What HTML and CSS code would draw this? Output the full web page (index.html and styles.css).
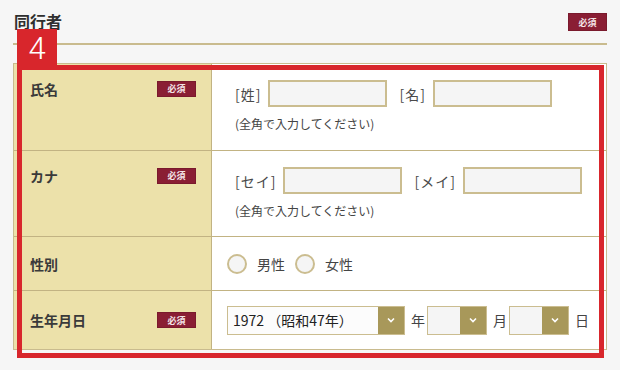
FILE: index.html
```html
<!DOCTYPE html>
<html lang="ja">
<head>
  <meta charset="UTF-8">
  <meta name="viewport" content="width=device-width, initial-scale=1.0">
  <title>同行者</title>
  <link rel="stylesheet" href="styles.css">
</head>
<body>

  <div class="wrap">
    <div class="head">
      <h2>同行者</h2>
      <span class="req req-lg">必須</span>
    </div>

    <div class="form">
      <div class="label top">
        <span>氏名</span>
        <span class="req">必須</span>
      </div>
      <div class="field">
        <div class="name">
          <span class="br">[姓]</span>
          <input type="text" class="txt">
          <span class="br br2">[名]</span>
          <input type="text" class="txt">
        </div>
        <p class="note">(全角で入力してください)</p>
      </div>

      <div class="label top">
        <span>カナ</span>
        <span class="req">必須</span>
      </div>
      <div class="field">
        <div class="name">
          <span class="br">[セイ]</span>
          <input type="text" class="txt">
          <span class="br br2">[メイ]</span>
          <input type="text" class="txt">
        </div>
        <p class="note">(全角で入力してください)</p>
      </div>

      <div class="label">
        <span>性別</span>
      </div>
      <div class="field middle">
        <label class="radio"><input type="radio" name="sex"> 男性</label>
        <label class="radio"><input type="radio" name="sex"> 女性</label>
      </div>

      <div class="label last">
        <span>生年月日</span>
        <span class="req">必須</span>
      </div>
      <div class="field middle last">
        <div class="sel sel-year">
          <select><option>1972 （昭和47年）</option></select>
          <span class="arrow"><svg width="8" height="6" viewBox="0 0 8 6"><path d="M1 1.5 L4 4.5 L7 1.5" fill="none" stroke="#fff" stroke-width="1.6"/></svg></span>
        </div>
        <span class="unit">年</span>
        <div class="sel sel-sm">
          <select><option></option></select>
          <span class="arrow"><svg width="8" height="6" viewBox="0 0 8 6"><path d="M1 1.5 L4 4.5 L7 1.5" fill="none" stroke="#fff" stroke-width="1.6"/></svg></span>
        </div>
        <span class="unit">月</span>
        <div class="sel sel-sm">
          <select><option></option></select>
          <span class="arrow"><svg width="8" height="6" viewBox="0 0 8 6"><path d="M1 1.5 L4 4.5 L7 1.5" fill="none" stroke="#fff" stroke-width="1.6"/></svg></span>
        </div>
        <span class="unit">日</span>
      </div>
    </div>

    <!-- annotation frame -->
    <div class="mark"></div>
    <span class="mark-num">4</span>
  </div>

</body>
</html>
```

FILE: styles.css
```css
body {
  margin: 0;
  background: #f6f6f6;
  font-family: "Noto Sans CJK JP", sans-serif;
  color: #333;
}

.wrap {
  position: relative;
  width: 594px;
  margin-left: 13px;
  padding-bottom: 20px;
}

.head {
  display: flex;
  justify-content: space-between;
  align-items: flex-start;
  height: 45px;
  padding-top: 12px;
  box-sizing: border-box;
  border-bottom: 2px solid #c9bb8e;
}

.head h2 {
  margin: 0 0 0 1px;
  font-size: 16px;
  line-height: 18px;
  font-weight: bold;
  color: #2f2f2f;
}

.req {
  display: inline-flex;
  align-items: center;
  justify-content: center;
  width: 39px;
  height: 16px;
  background: #8a1e34;
  color: #f3e3e6;
  font-size: 9px;
  font-weight: bold;
  border: 1px solid #7a1a2d;
  box-sizing: border-box;
}

.req-lg {
  height: 18px;
  margin-top: 1px;
}

.form {
  display: grid;
  grid-template-columns: 198px 1fr;
  grid-template-rows: 87px 86px 54px 58px;
  margin-top: 18px;
  border: 1px solid #c9bb8e;
  background: #fff;
}

.label {
  display: flex;
  justify-content: space-between;
  align-items: center;
  padding: 0 15px 0 16px;
  background: #ece1aa;
  border-right: 1px solid #c2b383;
  border-bottom: 1px solid #c2b383;
  font-size: 14px;
  font-weight: bold;
  color: #3a3a3a;
}

.label.top {
  align-items: flex-start;
  padding-top: 17px;
  line-height: 16px;
}

.field {
  padding: 16px 15px 0 15px;
  border-bottom: 1px solid #c2b383;
  font-size: 14px;
  color: #444;
}

.last {
  border-bottom: none;
}

.field.middle {
  display: flex;
  align-items: center;
  padding-top: 0;
}

.name {
  display: flex;
  align-items: center;
  margin-left: 8px;
}

.br {
  margin-right: 7px;
  letter-spacing: 1px;
  color: #4a4a4a;
}

.br2 {
  margin-left: 12px;
}

.txt {
  width: 119px;
  height: 27px;
  box-sizing: border-box;
  border: 2px solid #cbbd90;
  background: #f5f5f5;
  margin: 0;
}

.note {
  margin: 9px 0 0 8px;
  font-size: 12px;
  line-height: 16px;
  color: #444;
}

.radio {
  display: flex;
  align-items: center;
  margin-right: 10px;
  font-size: 14px;
  color: #444;
}

.radio input {
  appearance: none;
  width: 20px;
  height: 20px;
  margin: 0 10px 0 0;
  border: 2px solid #cbbd90;
  border-radius: 50%;
  background: #f5f5f5;
  box-sizing: border-box;
}

.sel {
  display: flex;
  height: 29px;
  border: 1px solid #cbbd90;
  box-sizing: border-box;
  background: #f5f5f5;
}

.sel select {
  appearance: none;
  flex: 1;
  min-width: 0;
  border: none;
  background: transparent;
  padding: 0 0 0 5px;
  font-family: "Noto Sans CJK JP", sans-serif;
  font-size: 14px;
  color: #222;
}

.sel-year {
  width: 178px;
  background: #fcfcfc;
}

.sel-sm {
  width: 60px;
}

.arrow {
  display: flex;
  align-items: center;
  justify-content: center;
  width: 26px;
  background: #a8985a;
}

.unit {
  margin: 0 2px 0 6px;
  font-size: 14px;
  color: #444;
}

.mark {
  position: absolute;
  left: 4px;
  top: 65px;
  width: 587px;
  height: 293px;
  box-sizing: border-box;
  border: 5px solid #d8262c;
  pointer-events: none;
}

.mark-num {
  position: absolute;
  left: 4px;
  top: 29px;
  width: 40px;
  height: 40px;
  background: #d8262c;
  color: #fff;
  font-family: Roboto, sans-serif;
  font-weight: 300;
  font-size: 31px;
  line-height: 40px;
  text-align: center;
}
```
